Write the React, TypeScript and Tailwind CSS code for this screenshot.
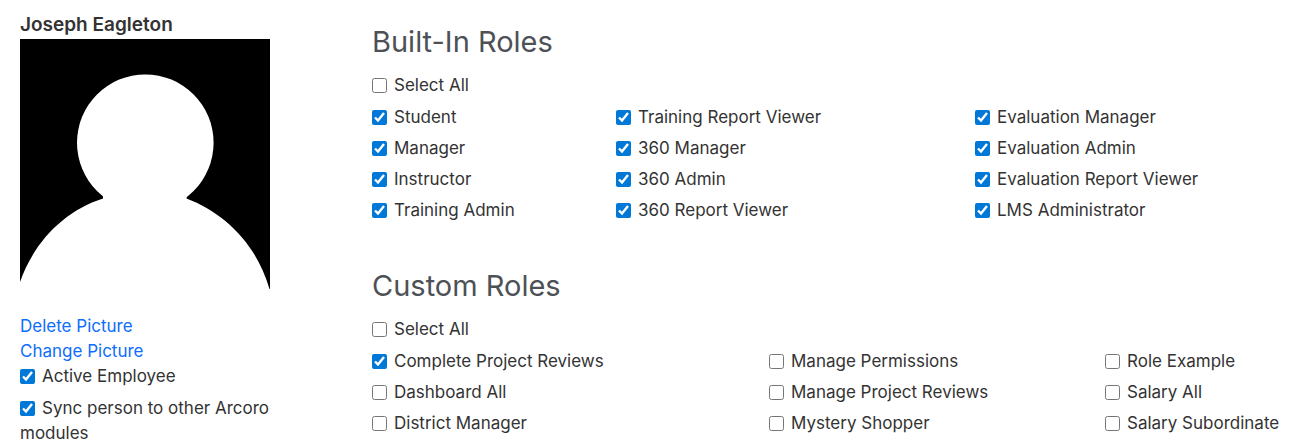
import { useState } from "react";

type Role = { name: string; checked: boolean };

const builtInRoles: Role[][] = [
    [
        { name: "Student", checked: true },
        { name: "Manager", checked: true },
        { name: "Instructor", checked: true },
        { name: "Training Admin", checked: true },
    ],
    [
        { name: "Training Report Viewer", checked: true },
        { name: "360 Manager", checked: true },
        { name: "360 Admin", checked: true },
        { name: "360 Report Viewer", checked: true },
    ],
    [
        { name: "Evaluation Manager", checked: true },
        { name: "Evaluation Admin", checked: true },
        { name: "Evaluation Report Viewer", checked: true },
        { name: "LMS Administrator", checked: true },
    ],
];

const customRoles: Role[][] = [
    [
        { name: "Complete Project Reviews", checked: true },
        { name: "Dashboard All", checked: false },
        { name: "District Manager", checked: false },
    ],
    [
        { name: "Manage Permissions", checked: false },
        { name: "Manage Project Reviews", checked: false },
        { name: "Mystery Shopper", checked: false },
    ],
    [
        { name: "Role Example", checked: false },
        { name: "Salary All", checked: false },
        { name: "Salary Subordinate", checked: false },
    ],
];

const Check = ({ name, checked }: Role) => {
    const [on, setOn] = useState(checked);

    return (
        <label className="block">
            <input
                type="checkbox"
                checked={on}
                onChange={(e) => setOn(e.target.checked)}
                className="mr-[7px] size-[15px] align-[-2px] accent-[#0078d7]"
            />
            {name}
        </label>
    );
};

const RoleSection = ({
    title,
    columns,
    grid,
}: {
    title: string;
    columns: Role[][];
    grid: string;
}) => {
    return (
        <section>
            <h2 className="mb-[13px] text-[29px] leading-9 text-[#4d5156]">
                {title}
            </h2>
            <Check name="Select All" checked={false} />
            <div className={`mt-[7px] grid ${grid}`}>
                {columns.map((roles) => (
                    <div key={roles[0].name} className="flex flex-col gap-1.5">
                        {roles.map((role) => (
                            <Check key={role.name} {...role} />
                        ))}
                    </div>
                ))}
            </div>
        </section>
    );
};

const App = () => {
    return (
        <div className="flex bg-white pl-5 font-['Inter',sans-serif] text-[17px] leading-[25px] text-[#333333]">
            {/* Profile */}
            <aside className="mr-[102px] w-[250px] shrink-0 pt-3">
                <h1 className="mb-0.5 text-[19px] leading-[25px] font-semibold">
                    Joseph Eagleton
                </h1>
                <svg
                    viewBox="0 0 250 250"
                    role="img"
                    aria-label="Joseph Eagleton"
                    className="mb-[25px] block w-full"
                >
                    <rect width="250" height="250" fill="#000" />
                    <circle cx="125.3" cy="103.7" r="68.3" fill="#fff" />
                    <path
                        fill="#fff"
                        d="M83 157H167L166.5 159.5C207 175 237 207 249.5 250H0V243C14 203 44 172 83 159.5Z"
                    />
                </svg>
                <a href="#delete" className="block text-[#0d6efd]">
                    Delete Picture
                </a>
                <a href="#change" className="block text-[#0d6efd]">
                    Change Picture
                </a>
                <div className="flex flex-col gap-[7px]">
                    <Check name="Active Employee" checked />
                    <Check
                        name="Sync person to other Arcoro modules"
                        checked
                    />
                </div>
            </aside>

            {/* Roles */}
            <main className="flex min-w-0 flex-1 flex-col gap-[45px] pt-6">
                <RoleSection
                    title="Built-In Roles"
                    columns={builtInRoles}
                    grid="grid-cols-[244fr_359fr_326fr]"
                />
                <RoleSection
                    title="Custom Roles"
                    columns={customRoles}
                    grid="grid-cols-[397fr_336fr_196fr]"
                />
            </main>
        </div>
    );
};

export default App;
